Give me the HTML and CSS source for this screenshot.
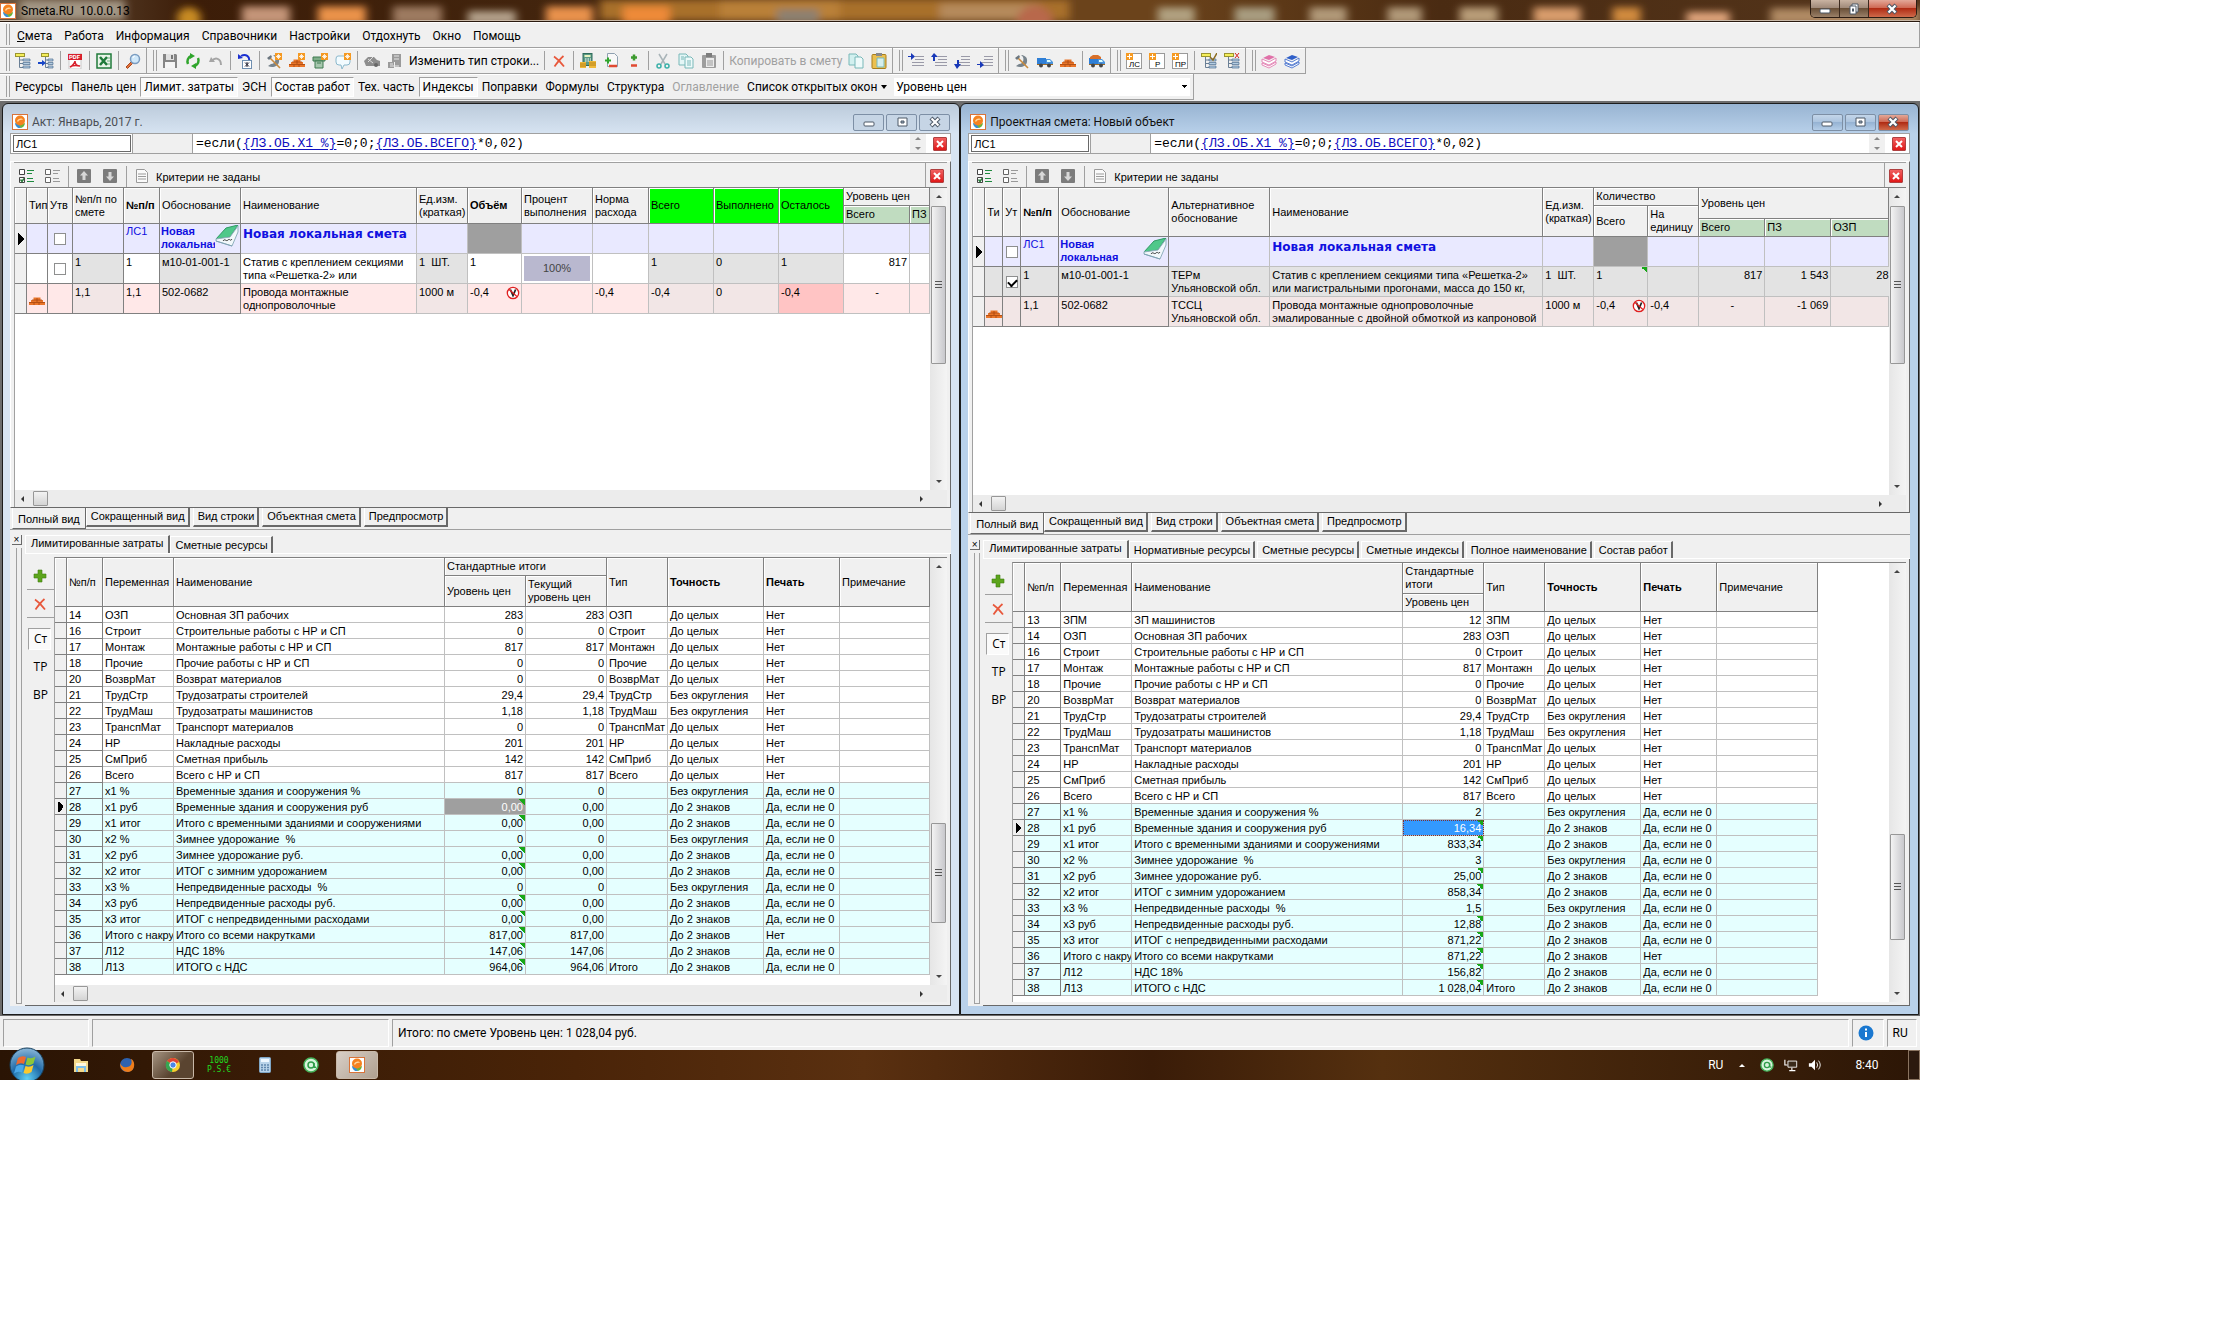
FILE: index.html
```html
<!DOCTYPE html>
<html lang="ru">
  <head>
    <meta charset="UTF-8" />
    <meta name="viewport" content="width=device-width, initial-scale=1.0" />
    <title>Smeta.RU 10.0.0.13</title>
    <link rel="stylesheet" href="styles.css">
  </head>
  <body>
    <!-- icon set -->
    <svg class="sprite" aria-hidden="true">
      <defs>
        <filter id="soft" x="-5%" y="-50%" width="110%" height="200%"><feGaussianBlur stdDeviation="4" /></filter>
        <radialGradient id="orb" cx=".5" cy=".9" r=".9">
          <stop offset="0" stop-color="#5fd0f5" /><stop offset=".5" stop-color="#1f6aa8" /><stop offset="1" stop-color="#8db8d8" />
        </radialGradient>
      </defs>
      <symbol id="i-logo" viewBox="0 0 16 16"><rect x=".5" y=".5" width="15" height="15" fill="#fff" stroke="#d9743a" /><path d="M3 9a5 5 0 0 0 6 5l-1-4z" fill="#3a8fd0" /><path d="M13 9a6 6 0 0 1-4 5L7 11z" fill="#6ab43a" /><circle cx="8" cy="6.5" r="5" fill="#f58220" /><path d="M5 7c2-3 5-3 6-1-2-.5-4 0-5 2z" fill="#ffd9a0" /></symbol>
      <symbol id="i-tree" viewBox="0 0 16 16"><rect x=".5" y=".5" width="9" height="3" fill="#f4ee5a" stroke="#9a9430" /><path d="M4.5 4v10.5H8M4.5 7H8M4.5 10.5H8" fill="none" stroke="#6a7f95" /><path d="M8 6h7v2H8zM8 9.5h7v2H8zM8 13h7v2H8z" fill="#b4cde2" stroke="#4f6f90" stroke-width=".7" /></symbol>
      <symbol id="i-treein" viewBox="0 0 16 16"><rect x="3.5" y=".5" width="7" height="3" fill="#f4ee5a" stroke="#9a9430" /><path d="M7.5 4v10.5H10M7.5 7H10M7.5 10.5H10" fill="none" stroke="#6a7f95" /><path d="M10 6h5v2h-5zM10 9.5h5v2h-5zM10 13h5v2h-5z" fill="#b4cde2" stroke="#4f6f90" stroke-width=".7" /><path d="M0 9h4V7l4 3-4 3v-2H0z" fill="#1846c8" /></symbol>
      <symbol id="i-pdf" viewBox="0 0 16 16"><path d="M2 0h12v16H2z" fill="#fff" stroke="#c9c9c9" /><rect x="1" y="1" width="14" height="6" fill="#d8202c" /><text x="2" y="6.3" font-size="6" font-weight="bold" fill="#fff">PDF</text><path d="M3 14c3-1 5-5 5-6 0 3 2 5 5 5-4-1-7-1-10 1z" fill="none" stroke="#d8202c" stroke-width="1.5" /></symbol>
      <symbol id="i-xls" viewBox="0 0 16 16"><rect x="1" y="1" width="14" height="14" fill="#e9f4e9" stroke="#1f7a3a" stroke-width="1.5" /><path d="M4 4l7 8M11 4l-7 8" stroke="#1f7a3a" stroke-width="2.5" /><path d="M11 5h3M11 8h3M11 11h3" stroke="#6ab07c" /></symbol>
      <symbol id="i-find" viewBox="0 0 16 16"><path d="M1 14l5-5 1.5 1.5-5 5z" fill="#e2703a" stroke="#a94a20" /><circle cx="10" cy="6" r="4.5" fill="#cfe8fa" stroke="#7a9cc0" stroke-width="1.5" /><path d="M8 5a2 2 0 0 1 2-2" fill="none" stroke="#fff" /></symbol>
      <symbol id="i-save" viewBox="0 0 16 16"><path d="M1 1h13l1 1v13H1z" fill="#858585" /><rect x="4" y="1" width="8" height="6" fill="#e0e0e0" /><rect x="9" y="2" width="2" height="4" fill="#777" /><rect x="3" y="9" width="10" height="6" fill="#f4f4f4" /></symbol>
      <symbol id="i-refresh" viewBox="0 0 16 16"><path d="M3 11A6 6 0 0 1 6 3M13 5a6 6 0 0 1-3 8" fill="none" stroke="#2fa52c" stroke-width="2.5" /><path d="M5 0l5 3-5 3zM11 16l-5-3 5-3z" fill="#2fa52c" /></symbol>
      <symbol id="i-undo" viewBox="0 0 16 16"><path d="M4 8c3-4 9-3 9 4" fill="none" stroke="#a5a5a5" stroke-width="2" /><path d="M1 9l2-5 4 5z" fill="#a5a5a5" /></symbol>
      <symbol id="i-restore" viewBox="0 0 16 16"><path d="M4 3c5-3 9 1 8 5" fill="none" stroke="#1a2fd0" stroke-width="2" /><path d="M1 6V1l5 4z" fill="#1a2fd0" /><rect x="5.5" y="7.5" width="9" height="8" fill="#fff" stroke="#6f8fb0" /><path d="M8 9.5l4 4M12 9.5l-4 4M10 9v5" stroke="#223" /></symbol>
      <symbol id="i-hammer" viewBox="0 0 16 16"><path d="M2 13c4 2 10 1 11-4S10 2 7 2c4 2 3 9-2 9z" fill="#77838c" /><path d="M3 4l11 11" stroke="#c98a3c" stroke-width="1.6" /><path d="M1 5l4-3 1 2-3 3z" fill="#6b7680" /></symbol>
      <symbol id="i-star" viewBox="0 0 16 16"><rect x="9" y="0" width="7" height="7" fill="#f59a23" /><path d="M12.5 1v5M10 3.5h5M11 2l3 3M14 2l-3 3" stroke="#fff" stroke-width=".8" /></symbol>
      <symbol id="i-bricks" viewBox="0 0 16 16"><path d="M0 14v-3h2V9h2.5V6.5h7V9H14v2h2v3z" fill="#e9762a" /><path d="M0 11.5h16M3 9h10M5 14v-2.5M10 14v-2.5M8 11V9M8 9V7" stroke="#a8480f" stroke-width=".8" /></symbol>
      <symbol id="i-box" viewBox="0 0 16 16"><path d="M1 4h12v4H1z" fill="#7fae8a" stroke="#3e7a50" /><path d="M3 8h8v7H3z" fill="#a7c7ae" stroke="#3e7a50" /><path d="M5 10h4" stroke="#3e7a50" /></symbol>
      <symbol id="i-note" viewBox="0 0 16 16"><path d="M3 3h9q3 0 3 3v3q0 3-3 3H9l-2 4-1-4H4q-3 0-3-3V6q0-3 2-3z" fill="#f2fbff" stroke="#8ab8cc" /></symbol>
      <symbol id="i-mixer" viewBox="0 0 16 16"><path d="M0 8l4-4h6l3 3 3 1v5H2z" fill="#8d8d8d" /><path d="M4 6l5 4M9 4l-5 5" stroke="#ddd" /><circle cx="12" cy="12" r="2" fill="#666" /></symbol>
      <symbol id="i-plant" viewBox="0 0 16 16"><path d="M5 1h9v13H8V9H5zM1 9h6v6H1z" fill="#9a9a9a" /><path d="M7 3h5M7 6h5M3 11h3M3 13h9" stroke="#e6e6e6" /></symbol>
      <symbol id="i-x" viewBox="0 0 16 16"><path d="M3 3.5c3 2 7 6 10 10M12.5 3C9 6 6 10 3.5 13.5" fill="none" stroke="#e8583c" stroke-width="1.8" /></symbol>
      <symbol id="i-calc" viewBox="0 0 16 16"><rect x="3" y=".5" width="9" height="12" fill="#5a9a86" stroke="#2f6b5a" /><rect x="4.5" y="2" width="6" height="2" fill="#e8f4c0" /><path d="M5 6h6M5 8h6" stroke="#fff" stroke-dasharray="1.5 1" /><path d="M0 9h6v6H0zM9 8h7v7H9z" fill="#f0b93a" /><path d="M0 11h6M0 13h6M9 10h7M9 12h7" stroke="#a67310" stroke-width=".8" /></symbol>
      <symbol id="i-docpm" viewBox="0 0 16 16"><path d="M4.5.5h7l3 3v10h-10z" fill="#f8f8f8" stroke="#8fa0b0" /><path d="M2 7.5h6M5 4.5v6" stroke="#2fa52c" stroke-width="2" /><path d="M6 13h8" stroke="#e04a32" stroke-width="2.5" /></symbol>
      <symbol id="i-pm" viewBox="0 0 16 16"><path d="M5 4.5h6M8 1.5v6" stroke="#3c9a2e" stroke-width="2.5" /><path d="M5 12.5h6" stroke="#e04a32" stroke-width="2.5" /></symbol>
      <symbol id="i-cut" viewBox="0 0 16 16"><path d="M4 1l6 10M12 1L6 11" stroke="#a9b4b8" stroke-width="1.5" /><circle cx="4" cy="13" r="2" fill="none" stroke="#3bb0a8" stroke-width="1.5" /><circle cx="12" cy="13" r="2" fill="none" stroke="#3bb0a8" stroke-width="1.5" /></symbol>
      <symbol id="i-copy" viewBox="0 0 16 16"><path d="M1 1h7l2 2v9H1z" fill="#e4f6f6" stroke="#79b8b8" /><path d="M7 4h6l2 2v9H7z" fill="#eefafa" stroke="#79b8b8" /><path d="M9 8h4M9 10h4M9 12h4M3 4h3M3 6h3" stroke="#79b8b8" /></symbol>
      <symbol id="i-copy2" viewBox="0 0 16 16"><path d="M1 1h7l2 2v9H1z" fill="#d2f0ef" stroke="#79b8b8" /><path d="M7 4h6l2 2v9H7z" fill="#eefafa" stroke="#79b8b8" /></symbol>
      <symbol id="i-paste" viewBox="0 0 16 16"><rect x="1" y="2" width="14" height="13" rx="1" fill="#9d9d9d" /><rect x="5" y="0" width="6" height="4" fill="#7d7d7d" /><path d="M5 5h8v9H5z" fill="#ececec" /><path d="M6 8h6M6 10h6M6 12h6" stroke="#999" /></symbol>
      <symbol id="i-paste2" viewBox="0 0 16 16"><rect x="1" y="1.5" width="14" height="14" rx="1" fill="#ecc04e" stroke="#a77d1c" /><rect x="5" y="0" width="6" height="3" fill="#8a8a8a" /><path d="M6 5h7v9H6z" fill="#d5efee" stroke="#79b8b8" /></symbol>
      <symbol id="i-lvl" viewBox="0 0 16 16"><path d="M7 6.5h9M4 9.5h12M4 12.5h12M7 3.5h9" stroke="#9a9aa8" stroke-width="1.2" /></symbol>
      <symbol id="i-truck" viewBox="0 0 16 16"><path d="M0 5h9v6H0z" fill="#2f7fd6" /><path d="M9 6h4l3 3v3H9z" fill="#4a93dd" /><path d="M10 7h3l1 2h-4z" fill="#dff" /><path d="M0 11h16v1H0z" fill="#a06a20" /><circle cx="4" cy="12.5" r="2" fill="#444" /><circle cx="12" cy="12.5" r="2" fill="#444" /></symbol>
      <symbol id="i-card" viewBox="0 0 16 16"><rect x=".5" y=".5" width="15" height="15" fill="#fff" stroke="#9a9a9a" /><rect width="7" height="7" fill="#f59a23" /><path d="M3.5 1v5M1 3.5h5" stroke="#fff" /></symbol>
      <symbol id="i-books" viewBox="0 0 16 16"><path d="M2 5l6-3 6 2-6 3z" fill="currentColor" /><path d="M1 6v3l7 3 7-4V5L8 9zM1 10l7 3 7-4v2l-7 4-7-3z" fill="#fff" stroke="currentColor" stroke-width=".8" /></symbol>
      <symbol id="i-checks" viewBox="0 0 16 16"><path d="M1.5 1.5h5v5h-5zM1.5 9.5h5v5h-5z" fill="#fff" stroke="#444" /><path d="M2.5 11.5l1.5 2 2-3" fill="none" stroke="#2a7a3a" stroke-width="1.5" /><path d="M9 2.5h7M9 5.5h5M9 10.5h6M9 13.5h7" stroke="#1f8a3f" /></symbol>
      <symbol id="i-unchecks" viewBox="0 0 16 16"><path d="M1.5 1.5h5v5h-5zM1.5 9.5h5v5h-5z" fill="#fff" stroke="#666" /><path d="M9 2.5h7M9 5.5h5M9 10.5h6M9 13.5h7" stroke="#999" /></symbol>
      <symbol id="i-up" viewBox="0 0 16 16"><rect x="1" y="1" width="14" height="14" rx="1" fill="#7c7c7c" /><path d="M8 3l4 4.5H9.5V12h-3V7.5H4z" fill="#d8d8d8" /></symbol>
      <symbol id="i-down" viewBox="0 0 16 16"><rect x="1" y="1" width="14" height="14" rx="1" fill="#7c7c7c" /><path d="M8 13l4-4.5H9.5V4h-3v4.5H4z" fill="#d8d8d8" /></symbol>
      <symbol id="i-doc" viewBox="0 0 16 16"><path d="M2.5 1.5h8l3 3v10h-11z" fill="#fafafa" stroke="#9a9a9a" /><path d="M4 6h8M4 8.5h8M4 11h8" stroke="#9a9a9a" /></symbol>
      <symbol id="i-book" viewBox="0 0 24 24"><path d="M1 14L11 3l12-3-8 12z" fill="#4fc88a" stroke="#2f9a64" /><path d="M1 14l14-2 8-11v6l-6 14-16-5z" fill="#f2f8fb" stroke="#8fb0bd" /><path d="M1 16l16 5" stroke="#7fa2b4" /><path d="M8 16c2-3 3 1 5-1s2 2 4-1" fill="none" stroke="#333" /></symbol>
      <symbol id="i-ban" viewBox="0 0 16 16"><circle cx="8" cy="8" r="6.5" fill="#fff" stroke="#e02020" stroke-width="1.5" /><path d="M5 4l3 7 3-7" fill="none" stroke="#222" stroke-width="2" /><path d="M3.5 4l9 8" stroke="#e02020" stroke-width="1.2" /></symbol>
      <symbol id="i-plus" viewBox="0 0 16 16"><path d="M6 2h4v4h4v4h-4v4H6v-4H2V6h4z" fill="#5ca51c" stroke="#3f7d10" stroke-width=".6" /></symbol>
      <symbol id="i-min" viewBox="0 0 16 12"><rect x="3" y="6" width="10" height="4" rx="1" fill="#fff" stroke="#4d5866" /></symbol>
      <symbol id="i-max" viewBox="0 0 16 12"><path d="M4 2h9v8H4z" fill="#fff" stroke="#4d5866" /><path d="M7 5h3v2H7z" fill="#9ab" stroke="#4d5866" /></symbol>
      <symbol id="i-rest" viewBox="0 0 16 12"><path d="M6 1h6v8H6z" fill="#fff" stroke="#4d5866" /><path d="M4 3h6v8H4z" fill="#fff" stroke="#4d5866" /><path d="M6 5.5h2v3H6z" fill="#4d5866" /></symbol>
      <symbol id="i-close" viewBox="0 0 16 12"><path d="M4 2l8 8M12 2l-8 8" stroke="#4d5866" stroke-width="4.2" /><path d="M4.5 2.5l7 7M11.5 2.5l-7 7" stroke="#fff" stroke-width="2.2" /></symbol>
      <symbol id="i-cross" viewBox="0 0 8 8"><path d="M1 1l6 6M7 1L1 7" stroke="#fff" stroke-width="2" /></symbol>
      <symbol id="i-folder" viewBox="0 0 16 16"><path d="M1 2h6l1 2h7v11H1z" fill="#f3d98b" /><path d="M3 6h10v5H3z" fill="#fff8dc" /><path d="M3 9h10v6h-2v-4H5v4H3z" fill="#7dbfe8" /></symbol>
      <symbol id="i-fox" viewBox="0 0 16 16"><circle cx="8" cy="8" r="7" fill="#2d62b0" /><path d="M1 6c0 6 4 9 8 9s7-4 6-9c-1-3-2-4-3-4 2 5-1 8-4 8-3 1-6-1-7-4z" fill="#ef7d1a" /></symbol>
      <symbol id="i-chrome" viewBox="0 0 16 16"><circle cx="8" cy="8" r="7" fill="#f7cf2e" /><path d="M8 8L2 4a7 7 0 0 1 12 1z" fill="#e04434" /><path d="M8 8L2 4a7 7 0 0 0 5 11z" fill="#35a652" /><circle cx="8" cy="8" r="3.2" fill="#4a86e8" stroke="#fff" /></symbol>
      <symbol id="i-calcw" viewBox="0 0 16 16"><rect x="2.5" y=".5" width="11" height="15" rx="1" fill="#b9d4ea" stroke="#7fa6c6" /><rect x="4" y="2" width="8" height="3" fill="#eef8ff" /><path d="M4 8h8M4 10.5h8M4 13h8" stroke="#5f86ad" stroke-width="1.5" stroke-dasharray="2 1" /></symbol>
      <symbol id="i-agent" viewBox="0 0 16 16"><circle cx="8" cy="8" r="7" fill="#d8f3dc" stroke="#45b35a" stroke-width="1.5" /><circle cx="8" cy="8" r="3" fill="none" stroke="#2e9c48" stroke-width="1.5" /><path d="M11 6v3q0 2 2 1" fill="none" stroke="#2e9c48" stroke-width="1.5" /></symbol>
      <symbol id="i-net" viewBox="0 0 16 16"><path d="M4.5 3.5h10v7h-10z" fill="#3a2a1a" stroke="#fff" /><path d="M1 2v6h3M9 11v3M6 14.5h7" fill="none" stroke="#fff" stroke-width="1.3" /></symbol>
      <symbol id="i-vol" viewBox="0 0 16 16"><path d="M1 6h3l4-4v12l-4-4H1z" fill="#fff" /><path d="M10 5q2 3 0 6M12 3q4 5 0 10" fill="none" stroke="#fff" /></symbol>
    </svg>

    <div class="desktop">
      <header class="titlebar">
        <svg class="wallpaper" viewBox="0 0 1920 22" preserveAspectRatio="none" aria-hidden="true">
          <g filter="url(#soft)">
            <rect x="600" width="470" height="22" fill="#a8702a" /><rect x="720" width="120" height="22" fill="#b98038" /><rect x="940" y="4" width="100" height="18" fill="#b58a5c" />
            <rect x="20" width="105" height="22" fill="#a39684" /><circle cx="189" cy="20" r="12" fill="#c78a20" />
            <rect x="242" y="7" width="48" height="20" fill="#c49478" /><rect x="318" y="7" width="48" height="20" fill="#ea9248" /><rect x="393" y="7" width="49" height="20" fill="#9d7a60" /><rect x="468" y="12" width="48" height="15" fill="#b3a08a" /><rect x="546" y="7" width="47" height="20" fill="#e8914c" /><rect x="623" y="7" width="47" height="20" fill="#ee8a38" />
            <rect x="777" y="10" width="42" height="16" fill="#8d8070" /><circle cx="1035" cy="24" r="18" fill="#b8684c" />
            <rect x="1158" y="8" width="37" height="18" fill="#b0a080" /><rect x="1235" y="8" width="40" height="18" fill="#a89c80" /><rect x="1310" y="8" width="37" height="18" fill="#b09878" /><rect x="1388" y="8" width="34" height="18" fill="#b09878" /><rect x="1460" y="8" width="38" height="18" fill="#b89c78" /><rect x="1534" y="8" width="47" height="18" fill="#d89c6c" /><rect x="1613" y="8" width="28" height="18" fill="#d08a3c" /><rect x="1687" y="13" width="43" height="14" fill="#e0a47c" /><rect x="1771" y="9" width="150" height="18" fill="#b08a64" />
          </g>
        </svg>
        <svg class="icon"><use href="#i-logo" /></svg>
        <h1>Smeta.RU&nbsp; 10.0.0.13</h1>
        <div class="caption-buttons">
          <button type="button" aria-label="Свернуть"><svg><use href="#i-min" /></svg></button><button type="button" aria-label="Восстановить"><svg><use href="#i-rest" /></svg></button><button type="button" class="close" aria-label="Закрыть"><svg><use href="#i-close" /></svg></button>
        </div>
      </header>

      <nav class="menubar">
        <span class="grip"></span>
        <button type="button"><u>С</u>мета</button>
        <button type="button">Работа</button>
        <button type="button">Информация</button>
        <button type="button">Справочники</button>
        <button type="button">Настройки</button>
        <button type="button">Отдохнуть</button>
        <button type="button">Окно</button>
        <button type="button">Помощь</button>
      </nav>

      <div class="toolbars">
        <div class="toolbar">
          <span class="grip"></span>
          <button type="button"><svg><use href="#i-tree" /></svg></button>
          <button type="button"><svg><use href="#i-treein" /></svg></button>
          <i class="sep"></i>
          <button type="button"><svg><use href="#i-pdf" /></svg></button>
          <i class="sep"></i>
          <button type="button"><svg><use href="#i-xls" /></svg></button>
          <i class="sep"></i>
          <button type="button"><svg><use href="#i-find" /></svg></button>
        </div>
        <div class="toolbar">
          <span class="grip"></span>
          <button type="button"><svg><use href="#i-save" /></svg></button>
          <button type="button"><svg><use href="#i-refresh" /></svg></button>
          <button type="button"><svg><use href="#i-undo" /></svg></button>
          <i class="sep"></i>
          <button type="button"><svg><use href="#i-restore" /></svg></button>
          <i class="sep"></i>
          <button type="button"><svg><use href="#i-hammer" /><use href="#i-star" /></svg></button>
          <button type="button"><svg><use href="#i-bricks" /><use href="#i-star" /></svg></button>
          <button type="button"><svg><use href="#i-box" /><use href="#i-star" /></svg></button>
          <button type="button"><svg><use href="#i-note" /><use href="#i-star" /></svg></button>
          <i class="sep"></i>
          <button type="button"><svg><use href="#i-mixer" /></svg></button>
          <button type="button"><svg><use href="#i-plant" /></svg></button>
          <button type="button" class="wide">Изменить тип строки...</button>
          <i class="sep"></i>
          <button type="button"><svg><use href="#i-x" /></svg></button>
          <i class="sep"></i>
          <button type="button"><svg><use href="#i-calc" /></svg></button>
          <button type="button"><svg><use href="#i-docpm" /></svg></button>
          <button type="button"><svg><use href="#i-pm" /></svg></button>
          <i class="sep"></i>
          <button type="button"><svg><use href="#i-cut" /></svg></button>
          <button type="button"><svg><use href="#i-copy" /></svg></button>
          <button type="button"><svg><use href="#i-paste" /></svg></button>
          <i class="sep"></i>
          <button type="button" class="wide" disabled>Копировать в смету</button>
          <button type="button"><svg><use href="#i-copy2" /></svg></button>
          <button type="button"><svg><use href="#i-paste2" /></svg></button>
        </div>
        <div class="toolbar">
          <span class="grip"></span>
          <button type="button"><svg><use href="#i-lvl" /><path d="M0 3h3V0l4 3.5L3 7V4H0z" fill="#1838b8" /></svg></button>
          <button type="button"><svg><use href="#i-lvl" /><path d="M2 8V4H0l3-4 4 4H4v4z" fill="#1838b8" /></svg></button>
          <button type="button"><svg><use href="#i-lvl" /><path d="M3 7v4H0l3 5 4-5H5V7z" fill="#1838b8" /></svg></button>
          <button type="button"><svg><use href="#i-lvl" /><path d="M0 11h3V8l4 4-4 3v-3H0z" fill="#1838b8" /></svg></button>
        </div>
        <div class="toolbar">
          <span class="grip"></span>
          <button type="button"><svg><use href="#i-hammer" /></svg></button>
          <button type="button"><svg><use href="#i-truck" /></svg></button>
          <button type="button"><svg><use href="#i-bricks" /></svg></button>
          <i class="sep"></i>
          <button type="button"><svg><use href="#i-truck" /><path d="M1 6V4l3-2h5l3 2v2z" fill="#d8702a" /></svg></button>
        </div>
        <div class="toolbar">
          <span class="grip"></span>
          <button type="button"><svg><use href="#i-card" /><text x="3" y="14" font-size="8">ЛС</text></svg></button>
          <button type="button"><svg><use href="#i-card" /><text x="6" y="14" font-size="8">Р</text></svg></button>
          <button type="button"><svg><use href="#i-card" /><text x="3" y="14" font-size="8">ПР</text></svg></button>
          <i class="sep"></i>
          <button type="button"><svg><use href="#i-tree" /><path d="M9 4l3 3 4-7" fill="none" stroke="#8a6a20" stroke-width="1.5" /></svg></button>
          <button type="button"><svg><use href="#i-tree" /><path d="M11 0l4 5M15 0l-4 5" stroke="#d82020" /></svg></button>
        </div>
        <div class="toolbar">
          <span class="grip"></span>
          <button type="button" class="pink"><svg><use href="#i-books" /></svg></button>
          <button type="button" class="blue"><svg><use href="#i-books" /></svg></button>
        </div>
      </div>

      <div class="toolbars">
        <div class="toolbar panels">
          <span class="grip"></span>
          <button type="button">Ресурсы</button>
          <button type="button">Панель цен</button>
          <button type="button" class="pressed">Лимит. затраты</button>
          <button type="button">ЭСН</button>
          <button type="button" class="pressed">Состав работ</button>
          <button type="button">Тех. часть</button>
          <button type="button" class="pressed">Индексы</button>
          <button type="button">Поправки</button>
          <button type="button">Формулы</button>
          <button type="button">Структура</button>
          <button type="button" disabled>Оглавление</button>
          <button type="button" class="dropdown">Список открытых окон</button>
          <select aria-label="Уровень цен"><option>Уровень цен</option></select>
        </div>
      </div>

      <main class="mdi">
        <!-- left window: act -->
        <section class="window">
          <div class="window-title">
            <svg class="icon"><use href="#i-logo" /></svg>
            <h2>Акт: Январь, 2017 г.</h2>
            <div class="window-buttons">
              <button type="button" aria-label="Свернуть"><svg><use href="#i-min" /></svg></button>
              <button type="button" aria-label="Развернуть"><svg><use href="#i-max" /></svg></button>
              <button type="button" aria-label="Закрыть"><svg><use href="#i-close" /></svg></button>
            </div>
          </div>
          <div class="window-body">
            <div class="formula">
              <input type="text" value="ЛС1" aria-label="Ячейка" />
              <span class="formula-gap"></span>
              <div class="formula-text">=если(<a href="#">{ЛЗ.ОБ.Х1 %}</a>=0;0;<a href="#">{ЛЗ.ОБ.ВСЕГО}</a>*0,02)</div>
              <span class="spin"><i class="arr up"></i><i class="arr down"></i></span>
              <button type="button" class="red" aria-label="Закрыть"><svg><use href="#i-cross" /></svg></button>
            </div>
            <div class="pane">
              <div class="filterbar">
                <button type="button"><svg><use href="#i-checks" /></svg></button>
                <button type="button"><svg><use href="#i-unchecks" /></svg></button>
                <i class="sep"></i>
                <button type="button"><svg><use href="#i-up" /></svg></button>
                <button type="button"><svg><use href="#i-down" /></svg></button>
                <i class="sep"></i>
                <button type="button"><svg><use href="#i-doc" /></svg></button>
                <span>Критерии не заданы</span>
                <div class="filter-close"><button type="button" class="red" aria-label="Закрыть"><svg><use href="#i-cross" /></svg></button></div>
              </div>
              <div class="view">
                <div class="view-row top-view">
                  <div class="sheet">
                    <table class="grid estimate">
                      <colgroup><col class="w12" /><col class="w21" /><col class="w25" /><col class="w51" /><col class="w36" /><col class="w81" /><col class="w176" /><col class="w51" /><col class="w54" /><col class="w71" /><col class="w56" /><col class="w65" /><col class="w65" /><col class="w65" /><col class="w66" /><col /></colgroup>
                      <thead>
                        <tr class="h18">
                          <th rowspan="2"></th><th rowspan="2">Тип</th><th rowspan="2">Утв</th><th rowspan="2">№п/п по<br />смете</th><th rowspan="2"><b>№п/п</b></th><th rowspan="2">Обоснование</th><th rowspan="2">Наименование</th><th rowspan="2">Ед.изм.<br />(краткая)</th><th rowspan="2"><b>Объём</b></th><th rowspan="2">Процент<br />выполнения</th><th rowspan="2">Норма<br />расхода</th><th rowspan="2" class="lime">Всего</th><th rowspan="2" class="lime">Выполнено</th><th rowspan="2" class="lime">Осталось</th><th colspan="2">Уровень цен</th>
                        </tr>
                        <tr class="h18"><th class="sage">Всего</th><th class="sage">ПЗ</th></tr>
                      </thead>
                      <tbody>
                        <tr class="section">
                          <td class="mark current"></td><td class="fix"></td><td class="fix mid"><input type="checkbox" aria-label="Утверждено" /></td><td class="fix"></td><td class="fix code">ЛС1</td>
                          <td class="fix book"><div class="with-icon"><b>Новая<br />локальная</b><svg><use href="#i-book" /></svg></div></td>
                          <td class="name">Новая локальная смета</td><td></td><td class="dark"></td><td></td><td></td><td></td><td></td><td></td><td></td><td></td>
                        </tr>
                        <tr>
                          <td class="mark"></td><td class="fix"></td><td class="fix mid"><input type="checkbox" aria-label="Утверждено" /></td><td class="fix gray">1</td><td class="fix">1</td><td class="fix gray">м10-01-001-1</td>
                          <td>Статив с креплением секциями<br />типа «Решетка-2» или</td><td class="gray">1&nbsp; ШТ.</td><td>1</td><td class="cell-progress"><div class="progress">100%</div></td><td></td><td class="gray">1</td><td class="gray">0</td><td class="gray">1</td><td class="num">817</td><td></td>
                        </tr>
                        <tr class="pink-row">
                          <td class="mark"></td><td class="fix mid"><svg><use href="#i-bricks" /></svg></td><td class="fix"></td><td class="fix rose">1,1</td><td class="fix">1,1</td><td class="fix rose">502-0682</td>
                          <td>Провода монтажные<br />однопроволочные</td><td class="rose">1000 м</td><td><div class="with-icon">-0,4<svg class="ban"><use href="#i-ban" /></svg></div></td><td></td><td>-0,4</td><td class="rose">-0,4</td><td class="rose">0</td><td class="deep">-0,4</td><td class="center">-</td><td></td>
                        </tr>
                      </tbody>
                    </table>
                  </div>
                  <div class="vscroll"><i class="arr up"></i><span class="thumb tall"></span><i class="arr down"></i></div>
                </div>
                <div class="hscroll"><i class="arr left"></i><span class="thumb"></span><i class="arr right"></i></div>
              </div>
            </div>
            <div class="tabs below">
              <button type="button" class="active">Полный вид</button>
              <button type="button">Сокращенный вид</button>
              <button type="button">Вид строки</button>
              <button type="button">Объектная смета</button>
              <button type="button">Предпросмотр</button>
            </div>
            <div class="dock">
              <div class="dock-grip"><button type="button" aria-label="Закрыть панель">×</button></div>
              <div class="dock-body">
                <div class="tabs above">
                  <button type="button" class="active">Лимитированные затраты</button>
                  <button type="button">Сметные ресурсы</button>
                </div>
                <div class="dock-main">
                  <div class="sidebar">
                    <button type="button" aria-label="Добавить"><svg><use href="#i-plus" /></svg></button>
                    <button type="button" aria-label="Удалить"><svg><use href="#i-x" /></svg></button>
                    <div class="modes"><button type="button" class="pressed">Ст</button><button type="button">ТР</button><button type="button">ВР</button></div>
                  </div>
                  <div class="view">
                    <div class="view-row">
                      <div class="sheet">
                        <table class="grid totals" id="act">
                          <colgroup><col class="w12" /><col class="w36" /><col class="w71" /><col class="w271" /><col class="w81" /><col class="w81" /><col class="w61" /><col class="w96" /><col class="w76" /><col /></colgroup>
                          <thead>
                            <tr class="h18"><th rowspan="2"></th><th rowspan="2">№п/п</th><th rowspan="2">Переменная</th><th rowspan="2">Наименование</th><th colspan="2">Стандартные итоги</th><th rowspan="2">Тип</th><th rowspan="2"><b>Точность</b></th><th rowspan="2"><b>Печать</b></th><th rowspan="2">Примечание</th></tr>
                            <tr class="h31"><th>Уровень цен</th><th>Текущий<br />уровень цен</th></tr>
                          </thead>
                          <tbody></tbody>
                        </table>
                      </div>
                      <div class="vscroll"><i class="arr up"></i><span class="track"></span><span class="thumb mid-size"></span><span class="tail"></span><i class="arr down"></i></div>
                    </div>
                    <div class="hscroll"><i class="arr left"></i><span class="thumb"></span><i class="arr right"></i></div>
                  </div>
                </div>
              </div>
            </div>
          </div>
        </section>

        <!-- right window: project estimate -->
        <section class="window focused">
          <div class="window-title">
            <svg class="icon"><use href="#i-logo" /></svg>
            <h2>Проектная смета: Новый объект</h2>
            <div class="window-buttons">
              <button type="button" aria-label="Свернуть"><svg><use href="#i-min" /></svg></button>
              <button type="button" aria-label="Развернуть"><svg><use href="#i-max" /></svg></button>
              <button type="button" class="close" aria-label="Закрыть"><svg><use href="#i-close" /></svg></button>
            </div>
          </div>
          <div class="window-body">
            <div class="formula">
              <input type="text" value="ЛС1" aria-label="Ячейка" />
              <span class="formula-gap"></span>
              <div class="formula-text">=если(<a href="#">{ЛЗ.ОБ.Х1 %}</a>=0;0;<a href="#">{ЛЗ.ОБ.ВСЕГО}</a>*0,02)</div>
              <span class="spin"><i class="arr up"></i><i class="arr down"></i></span>
              <button type="button" class="red" aria-label="Закрыть"><svg><use href="#i-cross" /></svg></button>
            </div>
            <div class="pane">
              <div class="filterbar">
                <button type="button"><svg><use href="#i-checks" /></svg></button>
                <button type="button"><svg><use href="#i-unchecks" /></svg></button>
                <i class="sep"></i>
                <button type="button"><svg><use href="#i-up" /></svg></button>
                <button type="button"><svg><use href="#i-down" /></svg></button>
                <i class="sep"></i>
                <button type="button"><svg><use href="#i-doc" /></svg></button>
                <span>Критерии не заданы</span>
                <div class="filter-close"><button type="button" class="red" aria-label="Закрыть"><svg><use href="#i-cross" /></svg></button></div>
              </div>
              <div class="view">
                <div class="view-row top-view">
                  <div class="sheet">
                    <table class="grid estimate">
                      <colgroup><col class="w12" /><col class="w18" /><col class="w18" /><col class="w38" /><col class="w110" /><col class="w101" /><col class="w273" /><col class="w51" /><col class="w54" /><col class="w51" /><col class="w66" /><col class="w66" /><col /></colgroup>
                      <thead>
                        <tr class="h18"><th rowspan="3"></th><th rowspan="3">Ти</th><th rowspan="3">Ут</th><th rowspan="3"><b>№п/п</b></th><th rowspan="3">Обоснование</th><th rowspan="3">Альтернативное<br />обоснование</th><th rowspan="3">Наименование</th><th rowspan="3">Ед.изм.<br />(краткая)</th><th colspan="2">Количество</th><th colspan="3" rowspan="2">Уровень цен</th></tr>
                        <tr class="h13"><th rowspan="2">Всего</th><th rowspan="2">На<br />единицу</th></tr>
                        <tr class="h18"><th class="sage">Всего</th><th class="sage">ПЗ</th><th class="sage">ОЗП</th></tr>
                      </thead>
                      <tbody>
                        <tr class="section">
                          <td class="mark current"></td><td class="fix"></td><td class="fix mid"><input type="checkbox" aria-label="Утверждено" /></td><td class="fix code">ЛС1</td>
                          <td class="fix book"><div class="with-icon"><b>Новая<br />локальная</b><svg><use href="#i-book" /></svg></div></td>
                          <td></td><td class="name">Новая локальная смета</td><td></td><td class="dark"></td><td></td><td></td><td></td><td></td>
                        </tr>
                        <tr class="gray-row">
                          <td class="mark"></td><td class="fix"></td><td class="fix mid"><input type="checkbox" aria-label="Утверждено" checked /></td><td class="fix">1</td><td class="fix">м10-01-001-1</td><td>ТЕРм<br />Ульяновской обл.</td>
                          <td>Статив с креплением секциями типа «Решетка-2»<br />или магистральными прогонами, масса до 150 кг,</td><td>1&nbsp; ШТ.</td><td class="calc">1</td><td></td><td class="num">817</td><td class="num">1 543</td><td class="num cut">28</td>
                        </tr>
                        <tr class="rose-row">
                          <td class="mark"></td><td class="fix mid"><svg><use href="#i-bricks" /></svg></td><td class="fix"></td><td class="fix">1,1</td><td class="fix">502-0682</td><td>ТССЦ<br />Ульяновской обл.</td>
                          <td>Провода монтажные однопроволочные<br />эмалированные с двойной обмоткой из капроновой</td><td>1000 м</td><td><div class="with-icon">-0,4<svg class="ban"><use href="#i-ban" /></svg></div></td><td>-0,4</td><td class="center">-</td><td class="num">-1 069</td><td></td>
                        </tr>
                      </tbody>
                    </table>
                  </div>
                  <div class="vscroll"><i class="arr up"></i><span class="thumb tall"></span><i class="arr down"></i></div>
                </div>
                <div class="hscroll"><i class="arr left"></i><span class="thumb"></span><i class="arr right"></i></div>
              </div>
            </div>
            <div class="tabs below">
              <button type="button" class="active">Полный вид</button>
              <button type="button">Сокращенный вид</button>
              <button type="button">Вид строки</button>
              <button type="button">Объектная смета</button>
              <button type="button">Предпросмотр</button>
            </div>
            <div class="dock">
              <div class="dock-grip"><button type="button" aria-label="Закрыть панель">×</button></div>
              <div class="dock-body">
                <div class="tabs above">
                  <button type="button" class="active">Лимитированные затраты</button>
                  <button type="button">Нормативные ресурсы</button>
                  <button type="button">Сметные ресурсы</button>
                  <button type="button">Сметные индексы</button>
                  <button type="button">Полное наименование</button>
                  <button type="button">Состав работ</button>
                </div>
                <div class="dock-main">
                  <div class="sidebar">
                    <button type="button" aria-label="Добавить"><svg><use href="#i-plus" /></svg></button>
                    <button type="button" aria-label="Удалить"><svg><use href="#i-x" /></svg></button>
                    <div class="modes"><button type="button" class="pressed">Ст</button><button type="button">ТР</button><button type="button">ВР</button></div>
                  </div>
                  <div class="view">
                    <div class="view-row">
                      <div class="sheet">
                        <table class="grid totals fit" id="project">
                          <colgroup><col class="w12" /><col class="w36" /><col class="w71" /><col class="w271" /><col class="w81" /><col class="w61" /><col class="w96" /><col class="w76" /><col class="w101" /></colgroup>
                          <thead>
                            <tr class="h31"><th rowspan="2"></th><th rowspan="2">№п/п</th><th rowspan="2">Переменная</th><th rowspan="2">Наименование</th><th>Стандартные<br />итоги</th><th rowspan="2">Тип</th><th rowspan="2"><b>Точность</b></th><th rowspan="2"><b>Печать</b></th><th rowspan="2">Примечание</th></tr>
                            <tr class="h18"><th>Уровень цен</th></tr>
                          </thead>
                          <tbody></tbody>
                        </table>
                      </div>
                      <div class="vscroll"><i class="arr up"></i><span class="track"></span><span class="thumb mid-size"></span><span class="tail"></span><i class="arr down"></i></div>
                    </div>
                  </div>
                </div>
              </div>
            </div>
          </div>
        </section>
      </main>

      <footer class="statusbar">
        <span class="s1"></span><span class="s2"></span><span class="s3">Итого: по смете Уровень цен: 1 028,04 руб.</span>
        <span class="s4"><svg viewBox="0 0 16 16"><circle cx="8" cy="8" r="7.5" fill="#1a78d0" /><path d="M8 7v5M8 3.5v2" stroke="#fff" stroke-width="2" /></svg></span><span class="s5">RU</span>
      </footer>

      <div class="taskbar">
        <button type="button" class="start" aria-label="Пуск">
          <svg viewBox="0 0 36 36"><circle cx="18" cy="18" r="17" fill="url(#orb)" stroke="#16405e" /><path d="M9 11q4-3 8-1l-2 7q-4-2-8 1z" fill="#ee6a30" /><path d="M18.5 10.5q4 2 8-1l-2 7q-4 3-8 1z" fill="#8cc63a" /><path d="M7 19.5q4-3 8-1l-2 7q-4-2-8 1z" fill="#4aa8e8" /><path d="M16.5 19q4 2 8-1l-2 7q-4 3-8 1z" fill="#fbc92e" /></svg>
        </button>
        <button type="button" aria-label="Проводник"><svg><use href="#i-folder" /></svg></button>
        <button type="button" aria-label="Firefox"><svg><use href="#i-fox" /></svg></button>
        <button type="button" class="open" aria-label="Chrome"><svg><use href="#i-chrome" /></svg></button>
        <button type="button" class="pse">1000<br />P.S.€</button>
        <button type="button" aria-label="Калькулятор"><svg><use href="#i-calcw" /></svg></button>
        <button type="button" aria-label="Агент"><svg><use href="#i-agent" /></svg></button>
        <button type="button" class="open lit" aria-label="Smeta.RU"><svg><use href="#i-logo" /></svg></button>
        <div class="tray">
          <span>RU</span><i class="arr up"></i><svg><use href="#i-agent" /></svg><svg><use href="#i-net" /></svg><svg><use href="#i-vol" /></svg><time>8:40</time>
        </div>
        <button type="button" class="show-desktop" aria-label="Свернуть все окна"></button>
      </div>
    </div>

    <script src="script.js"></script>
  </body>
</html>
```
FILE: styles.css
```css
* {
  box-sizing: border-box;
}
body {
  margin: 0;
  background: #fff;
  color: #000;
  font: 11px/13px "Liberation Sans", Arial, sans-serif;
}
button,
input,
select {
  font: inherit;
  color: inherit;
  margin: 0;
}
button {
  background: none;
  border: none;
  padding: 0;
  white-space: nowrap;
}
h1,
h2 {
  margin: 0;
  font-weight: normal;
}
svg {
  width: 16px;
  height: 16px;
  flex: none;
  display: block;
}
.sprite {
  position: absolute;
  width: 0;
  height: 0;
}
.desktop {
  width: 86%;
  background: #f0f0f0;
}

/* main window title */
.titlebar {
  position: relative;
  display: flex;
  align-items: center;
  height: 22px;
  overflow: hidden;
  background: linear-gradient(90deg, #6a5540, #3c1d08 10%, #43250e 30%, #6b431b 42%, #6b431b 60%, #4a2b12 75%, #54351b);
  border-bottom: 1px solid #2a1a10;
  box-shadow: inset 0 -1px #c9b9a8;
}
.wallpaper {
  position: absolute;
  top: 0;
  left: 0;
  width: 100%;
  height: 20px;
}
.titlebar h1,
.titlebar .icon,
.caption-buttons {
  position: relative;
}
.titlebar h1 {
  margin-left: 5px;
  font: 12px/16px Roboto, sans-serif;
}
.caption-buttons {
  display: flex;
  align-self: flex-start;
  margin-left: auto;
  margin-right: 3px;
  height: 18px;
  border: 1px solid #2c1c12;
  border-top: none;
  border-radius: 0 0 5px 5px;
  overflow: hidden;
}
.caption-buttons button {
  width: 29px;
  display: flex;
  justify-content: center;
  align-items: center;
  border-right: 1px solid #3c2a1e;
  background: linear-gradient(#c9b3a2, #a08a7a 45%, #6a5038 50%, #9a8068);
}
.caption-buttons .close {
  width: 47px;
  border: none;
}
.close {
  background: linear-gradient(#e3a898, #cf6a55 45%, #b02c14 50%, #cf6a4a) !important;
}

/* menu and toolbars */
.menubar,
.toolbar {
  display: flex;
  align-items: center;
  border-right: 1px solid #a0a0a0;
  border-bottom: 1px solid #a0a0a0;
  box-shadow: inset 0 1px #fff;
  font: 12px/16px Roboto, sans-serif;
}
.menubar {
  height: 26px;
}
.menubar button {
  padding: 2px 6px 0;
}
.grip {
  align-self: stretch;
  width: 4px;
  margin: 2px 1px 2px 6px;
  border-left: 1px solid #a0a0a0;
  border-right: 1px solid #a0a0a0;
}
.toolbars {
  display: flex;
  height: 26px;
}
.toolbar {
  padding-right: 2px;
}
.toolbar button {
  min-width: 23px;
  height: 20px;
  display: flex;
  justify-content: center;
  align-items: center;
}
.toolbar .wide {
  padding: 0 2px 0 3px;
}
.toolbar text {
  font-family: "Liberation Sans", sans-serif;
}
.sep {
  align-self: stretch;
  width: 1px;
  margin: 3px 2px 3px 3px;
  background: #a0a0a0;
}
button:disabled {
  color: #a0a0a0;
}
.pink {
  color: #e070a8;
}
.blue {
  color: #2f5fc8;
}
.toolbar.panels button {
  padding: 0 3px;
  border: 1px solid transparent;
}
.toolbar.panels .pressed {
  background: #fafafa;
  border-color: #a0a0a0 #fff #fff #a0a0a0;
}
.dropdown::after {
  content: "";
  margin-left: 4px;
  border: 3px solid transparent;
  border-top: 4px solid #000;
  border-bottom: none;
}
.panels select {
  width: 296px;
  height: 18px;
  margin: 0 1px 0 3px;
  border: none;
  padding: 0 2px;
  appearance: none;
  background: conic-gradient(from 315deg at 50% 100%, #000 90deg, transparent 0) right 3px center / 6px 3px no-repeat, #fff;
}

/* child windows */
.mdi {
  display: flex;
  align-items: stretch;
  margin-top: 1px;
  padding: 2px 1px 1px 2px;
  background: #6c6c6c;
}
.window {
  flex: 1 1 0;
  min-width: 0;
  display: flex;
  flex-direction: column;
  padding: 0 8px 8px 7px;
  border: 1px solid #1c1c1c;
  border-radius: 6px 6px 0 0;
  background: linear-gradient(#bccbdb, #d7e4f2 30px);
}
.focused {
  background: linear-gradient(#98b4d2, #b9d1ea 30px);
}
.window-title {
  display: flex;
  align-items: center;
  height: 29px;
  padding: 7px 1px 0 2px;
}
.window-title h2 {
  margin-left: 4px;
  font: 12px/16px Roboto, sans-serif;
  color: #4b4f55;
}
.focused h2 {
  color: #111;
}
.window-buttons {
  display: flex;
  gap: 2px;
  margin-left: auto;
}
.window-buttons button {
  width: 31px;
  height: 17px;
  display: flex;
  justify-content: center;
  align-items: center;
  border: 1px solid #7d8fa5;
  border-radius: 2px;
  background: #c6d5e5;
}
.focused .window-buttons button {
  background: linear-gradient(#c3d5e9, #aac3de 50%, #96b3d3 50%, #b5cee8);
}
.window-buttons svg,
.caption-buttons svg {
  height: 12px;
}
.window-body {
  flex: 1;
  display: flex;
  flex-direction: column;
  background: #f0f0f0;
}
.formula {
  display: flex;
  align-items: center;
  height: 21px;
  border: 1px solid #a0a0a0;
  background: #fff;
}
.formula input {
  width: 118px;
  height: 17px;
  margin-left: 2px;
  padding: 0 2px;
  border: 1px solid #696969;
  outline: none;
}
.formula-gap {
  align-self: stretch;
  width: 61px;
  margin-left: 1px;
  border: 1px solid #a0a0a0;
  border-width: 0 1px;
  background: #f0f0f0;
}
.formula-text {
  flex: 1;
  margin-left: 3px;
  font: 13px/16px "Liberation Mono", monospace;
}
.formula a {
  color: #1010c0;
  text-underline-offset: 2px;
}
.spin {
  align-self: stretch;
  width: 16px;
  display: flex;
  flex-direction: column;
  justify-content: space-around;
  align-items: center;
  background: #f0f0f0;
}
.red {
  width: 14px;
  height: 14px;
  margin: 0 3px 0 7px;
  display: flex;
  align-items: center;
  justify-content: center;
  border: 1px solid #b04040;
  border-radius: 1px;
  background: linear-gradient(#f06060, #e01818);
}
.red svg {
  width: 8px;
  height: 8px;
}
.arr {
  width: 0;
  height: 0;
  flex: none;
  border: 3px solid transparent;
}
.arr.up {
  border-top: none;
  border-bottom-color: #444;
}
.arr.down {
  border-bottom: none;
  border-top-color: #444;
}
.arr.left {
  border-left: none;
  border-right-color: #333;
}
.arr.right {
  border-right: none;
  border-left-color: #333;
}
.spin .up {
  border-bottom-color: #888;
}
.spin .down {
  border-top-color: #888;
}

/* upper pane */
.pane {
  margin-top: 7px;
  padding: 0 3px;
  border-right: 1px solid #696969;
  border-bottom: 1px solid #696969;
  border-top: 1px solid #fff;
  border-left: 1px solid #fff;
}
.filterbar {
  display: flex;
  align-items: center;
  height: 25px;
  border-top: 1px solid #a0a0a0;
}
.filterbar button {
  margin-top: 2px;
}
.filterbar > button {
  width: 26px;
  display: flex;
  justify-content: center;
}
.filterbar > button:first-child {
  margin-left: -1px;
}
.filterbar .sep {
  margin: 3px 2px 0 3px;
}
.filterbar span {
  margin: 5px 0 0 1px;
}
.filter-close {
  align-self: stretch;
  display: flex;
  align-items: center;
  margin-left: auto;
  border-left: 1px solid #a0a0a0;
}
.filter-close .red {
  margin-left: 4px;
}
.view {
  flex: 1;
  min-width: 0;
  display: flex;
  flex-direction: column;
  border-top: 1px solid #808080;
  border-left: 1px solid #a0a0a0;
}
.view-row {
  display: flex;
  flex: 1;
  background: #fff;
}
.top-view {
  flex: none;
  height: 302px;
}
.focused .top-view {
  height: 307px;
}
.sheet {
  flex: 1;
  min-width: 0;
  overflow: hidden;
}
.vscroll,
.hscroll {
  display: flex;
  align-items: center;
  background: #ececec;
}
.vscroll {
  flex-direction: column;
  width: 17px;
  padding: 7px 0;
  background: linear-gradient(90deg, #e6e6e6, #f4f4f4);
}
.hscroll {
  height: 17px;
  padding: 0 24px 0 6px;
}
.arr.right {
  margin-left: auto;
}
.vscroll > .down:last-child {
  margin-top: auto;
}
.thumb {
  width: 15px;
  height: 15px;
  border: 1px solid #979797;
  border-radius: 1px;
  background: linear-gradient(#f3f3f3, #d4d4d4);
}
.hscroll .thumb {
  margin-left: 9px;
}
.vscroll .thumb {
  background: repeating-linear-gradient(#555 0 1px, transparent 1px 3px) center / 7px 9px no-repeat, linear-gradient(90deg, #f3f3f3, #c8c8cc);
}
.vscroll .tall {
  height: 158px;
  margin-top: 8px;
}
.vscroll .mid-size {
  height: 100px;
}
.focused .mid-size {
  height: 106px;
}
.track {
  flex: 1;
}
.tail {
  height: 52px;
}

/* data grids */
.grid {
  width: 100%;
  table-layout: fixed;
  border-spacing: 0;
}
.grid.fit {
  width: 805px;
}
.w12 { width: 12px; }
.w18 { width: 18px; }
.w21 { width: 21px; }
.w25 { width: 25px; }
.w36 { width: 36px; }
.w38 { width: 38px; }
.w51 { width: 51px; }
.w54 { width: 54px; }
.w56 { width: 56px; }
.w61 { width: 61px; }
.w65 { width: 65px; }
.w66 { width: 66px; }
.w71 { width: 71px; }
.w76 { width: 76px; }
.w81 { width: 81px; }
.w96 { width: 96px; }
.w101 { width: 101px; }
.w110 { width: 110px; }
.w176 { width: 176px; }
.w271 { width: 271px; }
.w273 { width: 273px; }
.h13 { height: 13px; }
.h18 { height: 18px; }
.h31 { height: 31px; }
.grid th,
.grid td {
  padding: 0 1px 0 2px;
  overflow: hidden;
  white-space: nowrap;
  text-align: left;
}
.grid th {
  font-weight: normal;
  vertical-align: middle;
  background: #f0f0f0;
  border-right: 1px solid #808080;
  border-bottom: 1px solid #808080;
  box-shadow: inset 1px 1px #fff;
}
.grid th.lime {
  background: #00ff00;
}
.grid th.sage {
  background: #c0dcc0;
}
.grid td {
  border-right: 1px solid #c0c0c0;
  border-bottom: 1px solid #c0c0c0;
}
.grid td.mark,
.grid td.fix {
  border-color: #808080;
}
.grid tr td.mark {
  background-color: #f0f0f0;
}
.grid tr td.current {
  background-image: conic-gradient(from 225deg at 100% 50%, #000 90deg, transparent 0);
  background-size: 6px 12px;
  background-position: 3px center;
  background-repeat: no-repeat;
}
.estimate tbody tr {
  height: 30px;
}
.estimate td {
  vertical-align: top;
  padding-top: 2px;
}
.estimate .mid {
  vertical-align: middle;
  text-align: center;
  padding: 0 1px;
}
.mid input {
  display: block;
  appearance: none;
  width: 12px;
  height: 12px;
  margin: 0 auto;
  border: 1px solid #8e8f8f;
  background: #fff;
}
.mid input:checked::after {
  content: "";
  display: block;
  width: 7px;
  height: 4px;
  margin: 2px 1px;
  border: 2px solid #000;
  border-width: 0 0 2px 2px;
  rotate: -45deg;
}
.mid svg {
  margin: 0 auto;
}
.section td {
  background: #e9e9ff;
  color: #1010e0;
}
.estimate .section td {
  padding-top: 1px;
}
.estimate .section .book {
  padding-left: 1px;
}
.estimate .section .name {
  font: bold 12px/18px "DejaVu Sans", sans-serif;
}
.section td.dark {
  background: #9f9f9f;
}
.with-icon {
  display: flex;
}
.with-icon b {
  flex: 1;
  overflow: hidden;
}
.with-icon svg {
  width: 24px;
  height: 24px;
}
.with-icon .ban {
  width: 14px;
  height: 14px;
  margin-left: auto;
}
.gray,
.gray-row td {
  background: #e3e3e3;
}
.pink-row td {
  background: #ffe8e8;
}
.rose-row td,
.grid .rose {
  background: #f2e6e6;
}
.grid .deep {
  background: #ffc4c4;
}
.grid .num {
  padding-right: 2px;
  text-align: right;
}
.grid .cut {
  padding-right: 0;
  border-right: none;
}
.grid .center {
  text-align: center;
}
.estimate .cell-progress {
  padding: 2px;
}
.progress {
  height: 25px;
  line-height: 25px;
  text-align: center;
  background: #b9b8cf;
  color: #444;
}
.grid .calc {
  background-image: linear-gradient(to top right, transparent 50%, #18a818 50%);
  background-size: 6px 6px;
  background-position: right top;
  background-repeat: no-repeat;
}
.totals tbody tr {
  height: 16px;
}
.totals td {
  line-height: 14px;
}
.totals .extra td:not(.mark) {
  background-color: #e5ffff;
}
.totals .extra td.inactive {
  background-color: #9f9f9f;
  color: #fff;
}
.totals .extra td.selected {
  background-color: #3399ff;
  color: #fff;
  outline: 1px dotted #803030;
  outline-offset: -1px;
}

/* tabs */
.tabs {
  display: flex;
}
.tabs button {
  padding: 0 3px 0 4px;
}
.tabs.below {
  height: 22px;
  padding-left: 2px;
  align-items: flex-start;
  border-bottom: 1px solid #a0a0a0;
}
.below button {
  height: 19px;
  margin-right: 3px;
  border-right: 2px solid #696969;
  border-bottom: 2px solid #696969;
  border-left: 1px solid #fff;
}
.below .active {
  height: 21px;
  margin-right: 0;
  padding: 2px 5px 0;
  border-right-width: 1px;
  border-bottom-width: 1px;
}
.tabs.above {
  height: 19px;
  align-items: flex-end;
  border-bottom: 1px solid #fff;
}
.above button {
  height: 17px;
  margin-right: 2px;
  border-top: 1px solid #fff;
  border-left: 1px solid #fff;
  border-right: 2px solid #696969;
}
.above .active {
  height: 18px;
  padding: 0 5px 2px;
  margin-right: 0;
}

/* lower dock */
.dock {
  flex: 1;
  display: flex;
  padding-top: 5px;
}
.dock-grip {
  width: 15px;
  padding: 0 3px 2px 2px;
  display: flex;
  flex-direction: column;
}
.dock-grip button {
  width: 10px;
  height: 10px;
  font: 10px/8px "Liberation Sans", sans-serif;
  border-right: 1px solid #696969;
  border-bottom: 1px solid #696969;
}
.dock-grip::after {
  content: "";
  flex: 1;
  width: 4px;
  margin: 3px 0 0 4px;
  border: 1px solid #a0a0a0;
  border-top: none;
}
.dock-body {
  flex: 1;
  min-width: 0;
  display: flex;
  flex-direction: column;
}
.dock-main {
  flex: 1;
  display: flex;
  padding: 3px 3px 3px 2px;
  border-right: 1px solid #696969;
  border-bottom: 1px solid #696969;
}
.sidebar {
  width: 27px;
  display: flex;
  flex-direction: column;
}
.sidebar > button {
  height: 28px;
  display: flex;
  align-items: center;
  justify-content: center;
  padding-right: 2px;
  border-bottom: 1px solid #a0a0a0;
}
.sidebar > button:first-child {
  height: 33px;
  padding-top: 5px;
}
.modes {
  display: flex;
  flex-direction: column;
  gap: 6px;
  margin: 10px 3px 0 1px;
  font: 12px/16px "Open Sans", sans-serif;
}
.modes button {
  height: 22px;
  padding-left: 2px;
  border: 1px solid transparent;
}
.modes .pressed {
  background: #fafafa;
  border-color: #a0a0a0 #fff #fff #a0a0a0;
}
#act {
  margin-bottom: 10px;
}
#project {
  margin-bottom: 6px;
}

/* status bar and taskbar */
.statusbar {
  display: flex;
  gap: 3px;
  height: 34px;
  padding: 3px;
  font: 12px/26px Roboto, sans-serif;
  background: #f0f0f0;
}
.statusbar span {
  border: 1px solid #a0a0a0;
  border-right-color: #fff;
  border-bottom-color: #fff;
  padding: 0 5px;
}
.s1 { width: 86px; }
.s2 { width: 297px; }
.s3 { flex: 1; }
.statusbar .s4 {
  width: 32px;
  display: flex;
  align-items: center;
}
.s5 { width: 30px; }
.taskbar {
  display: flex;
  align-items: center;
  gap: 4px;
  height: 30px;
  color: #fff;
  background: linear-gradient(90deg, #2a1404, #4a2408 30%, #5a3010 45%, #3a1c08 60%, #55300f 72%, #2c1606);
  font: 12px/16px Roboto, sans-serif;
}
.taskbar button {
  width: 42px;
  height: 28px;
  display: flex;
  align-items: center;
  justify-content: center;
}
.taskbar .start {
  width: 54px;
  margin-right: 2px;
}
.start svg {
  width: 36px;
  height: 36px;
}
.taskbar .open {
  border: 1px solid #c8b8a8;
  border-radius: 3px;
  background: linear-gradient(135deg, #a59482, #5a4430 60%);
}
.taskbar .lit {
  background: linear-gradient(135deg, #d8cfc6, #b0a090);
}
.taskbar .pse {
  font: 8px/9px "DejaVu Sans Mono", monospace;
  color: #20d820;
}
.tray {
  display: flex;
  align-items: center;
  gap: 10px;
  margin-left: auto;
}
.tray svg {
  width: 14px;
  height: 14px;
}
.tray .arr {
  border-bottom-color: #fff;
  margin: 0 5px 0 6px;
}
.tray time {
  margin: 0 25px 0 23px;
}
.taskbar .show-desktop {
  width: 12px;
  height: 30px;
  border: 1px solid #8a7460;
  background: #2c1a0e;
}
```
FILE: script.js
```js
// номер, переменная, наименование, тип, точность, печать
const NONE = "До целых";
const TWO = "До 2 знаков";
const RAW = "Без округления";
const IF = "Да, если не 0";

const rows = [
  [13, "ЗПМ", "ЗП машинистов", "ЗПМ", NONE, "Нет"],
  [14, "ОЗП", "Основная ЗП рабочих", "ОЗП", NONE, "Нет"],
  [16, "Строит", "Строительные работы с НР и СП", "Строит", NONE, "Нет"],
  [17, "Монтаж", "Монтажные работы с НР и СП", "Монтажн", NONE, "Нет"],
  [18, "Прочие", "Прочие работы с НР и СП", "Прочие", NONE, "Нет"],
  [20, "ВозврМат", "Возврат материалов", "ВозврМат", NONE, "Нет"],
  [21, "ТрудСтр", "Трудозатраты строителей", "ТрудСтр", RAW, "Нет"],
  [22, "ТрудМаш", "Трудозатраты машинистов", "ТрудМаш", RAW, "Нет"],
  [23, "ТранспМат", "Транспорт материалов", "ТранспМат", NONE, "Нет"],
  [24, "НР", "Накладные расходы", "НР", NONE, "Нет"],
  [25, "СмПриб", "Сметная прибыль", "СмПриб", NONE, "Нет"],
  [26, "Всего", "Всего с НР и СП", "Всего", NONE, "Нет"],
  [27, "х1 %", "Временные здания и сооружения %", "", RAW, IF],
  [28, "х1 руб", "Временные здания и сооружения руб", "", TWO, IF],
  [29, "х1 итог", "Итого с временными зданиями и сооружениями", "", TWO, IF],
  [30, "х2 %", "Зимнее удорожание\u00a0 %", "", RAW, IF],
  [31, "х2 руб", "Зимнее удорожание руб.", "", TWO, IF],
  [32, "х2 итог", "ИТОГ с зимним удорожанием", "", TWO, IF],
  [33, "х3 %", "Непредвиденные расходы\u00a0 %", "", RAW, IF],
  [34, "х3 руб", "Непредвиденные расходы руб.", "", TWO, IF],
  [35, "х3 итог", "ИТОГ с непредвиденными расходами", "", TWO, IF],
  [36, "Итого с накру", "Итого со всеми накрутками", "", TWO, "Нет"],
  [37, "Л12", "НДС 18%", "", TWO, IF],
  [38, "Л13", "ИТОГО с НДС", "Итого", TWO, IF],
];

const act = ["283", "0", "817", "0", "0", "29,4", "1,18", "0", "201", "142", "817", "0", "0,00", "0,00", "0", "0,00", "0,00", "0", "0,00", "0,00", "817,00", "147,06", "964,06"];
const project = ["12", "283", "0", "817", "0", "0", "29,4", "1,18", "0", "201", "142", "817", "2", "16,34", "833,34", "3", "25,00", "858,34", "1,5", "12,88", "871,22", "871,22", "156,82", "1 028,04"];

function fill(id, list, values, twice, active) {
  const body = document.querySelector(`#${id} tbody`);
  body.innerHTML = list
    .map(([num, code, name, type, precision, print], i) => {
      const calc = num > 26 && precision === TWO ? " calc" : "";
      const state = num === 28 ? ` ${active}` : "";
      return `<tr class="${num > 26 ? "extra" : ""}">
        <td class="mark${num === 28 ? " current" : ""}"></td>
        <td class="fix">${num}</td>
        <td>${code}</td>
        <td>${name}</td>
        <td class="num${calc}${state}">${values[i]}</td>
        ${twice ? `<td class="num">${values[i]}</td>` : ""}
        <td>${type}</td>
        <td>${precision}</td>
        <td>${print}</td>
        <td></td>
      </tr>`;
    })
    .join("");
}

fill("act", rows.slice(1), act, true, "inactive");
fill("project", rows, project, false, "selected");
```
